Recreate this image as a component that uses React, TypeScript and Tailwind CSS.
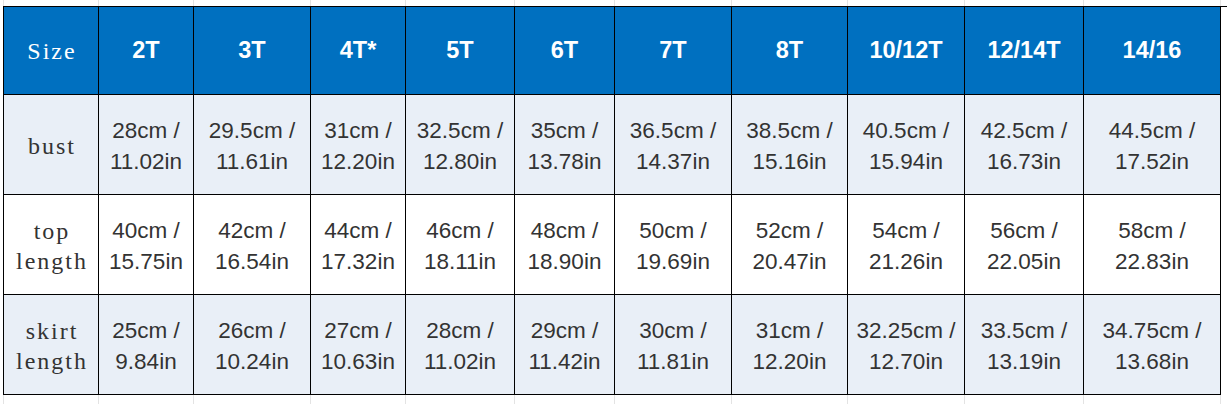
import React from "react";

const headers = ["2T", "3T", "4T*", "5T", "6T", "7T", "8T", "10/12T", "12/14T", "14/16"];

const rows: { label: string[]; values: [string, string][]; shaded: boolean }[] = [
  {
    label: ["bust"],
    shaded: true,
    values: [
      ["28cm /", "11.02in"],
      ["29.5cm /", "11.61in"],
      ["31cm /", "12.20in"],
      ["32.5cm /", "12.80in"],
      ["35cm /", "13.78in"],
      ["36.5cm /", "14.37in"],
      ["38.5cm /", "15.16in"],
      ["40.5cm /", "15.94in"],
      ["42.5cm /", "16.73in"],
      ["44.5cm /", "17.52in"],
    ],
  },
  {
    label: ["top", "length"],
    shaded: false,
    values: [
      ["40cm /", "15.75in"],
      ["42cm /", "16.54in"],
      ["44cm /", "17.32in"],
      ["46cm /", "18.11in"],
      ["48cm /", "18.90in"],
      ["50cm /", "19.69in"],
      ["52cm /", "20.47in"],
      ["54cm /", "21.26in"],
      ["56cm /", "22.05in"],
      ["58cm /", "22.83in"],
    ],
  },
  {
    label: ["skirt", "length"],
    shaded: true,
    values: [
      ["25cm /", "9.84in"],
      ["26cm /", "10.24in"],
      ["27cm /", "10.63in"],
      ["28cm /", "11.02in"],
      ["29cm /", "11.42in"],
      ["30cm /", "11.81in"],
      ["31cm /", "12.20in"],
      ["32.25cm /", "12.70in"],
      ["33.5cm /", "13.19in"],
      ["34.75cm /", "13.68in"],
    ],
  },
];

const gridCols =
  "grid grid-cols-[95px_95px_117px_95px_109px_100px_117px_116px_117px_119px_137px]";

function Strip({ h }: { h: string }) {
  return (
    <div className={`${gridCols} border-l border-[#e3e3e3] ${h}`}>
      {Array.from({ length: 11 }).map((_, i) => (
        <div key={i} className="border-r border-[#e3e3e3]" />
      ))}
    </div>
  );
}

export default function App() {
  return (
    <div className="w-[1227px] h-[404px] bg-white overflow-hidden pl-[3px]">
      <Strip h="h-[6px]" />
      <div
        className={`${gridCols} grid-rows-[88px_100px_100px_100px] border-l border-t border-black`}
      >
        <div
          className="bg-[#0070c0] border-r border-b border-black flex items-center justify-center text-white text-[24px] tracking-[2px] pl-[2px]"
          style={{ fontFamily: '"Liberation Serif", "Noto Sans CJK SC", serif' }}
        >
          Size
        </div>
        {headers.map((h) => (
          <div
            key={h}
            className="bg-[#0070c0] border-r border-b border-black flex items-center justify-center text-white text-[23.5px] font-bold"
            style={{ fontFamily: '"Liberation Sans", Arial, sans-serif' }}
          >
            {h}
          </div>
        ))}
        {rows.map((r, ri) => (
          <React.Fragment key={ri}>
            <div
              className={`${r.shaded ? "bg-[#e9eff7]" : "bg-white"} border-r border-b border-black flex flex-col items-center justify-center text-[#333333] text-[24px] leading-[30px] tracking-[2px] pl-[2px] pt-[2px]`}
              style={{ fontFamily: '"Liberation Serif", "Noto Sans CJK SC", serif' }}
            >
              {r.label.map((l) => (
                <span key={l}>{l}</span>
              ))}
            </div>
            {r.values.map((v, vi) => (
              <div
                key={vi}
                className={`${r.shaded ? "bg-[#e9eff7]" : "bg-white"} border-r border-b border-black flex flex-col items-center justify-center text-[#333333] text-[22.5px] leading-[31px] pt-[3px]`}
                style={{ fontFamily: '"Liberation Sans", Arial, sans-serif' }}
              >
                <span>{v[0]}</span>
                <span>{v[1]}</span>
              </div>
            ))}
          </React.Fragment>
        ))}
      </div>
      <Strip h="h-[10px]" />
    </div>
  );
}
